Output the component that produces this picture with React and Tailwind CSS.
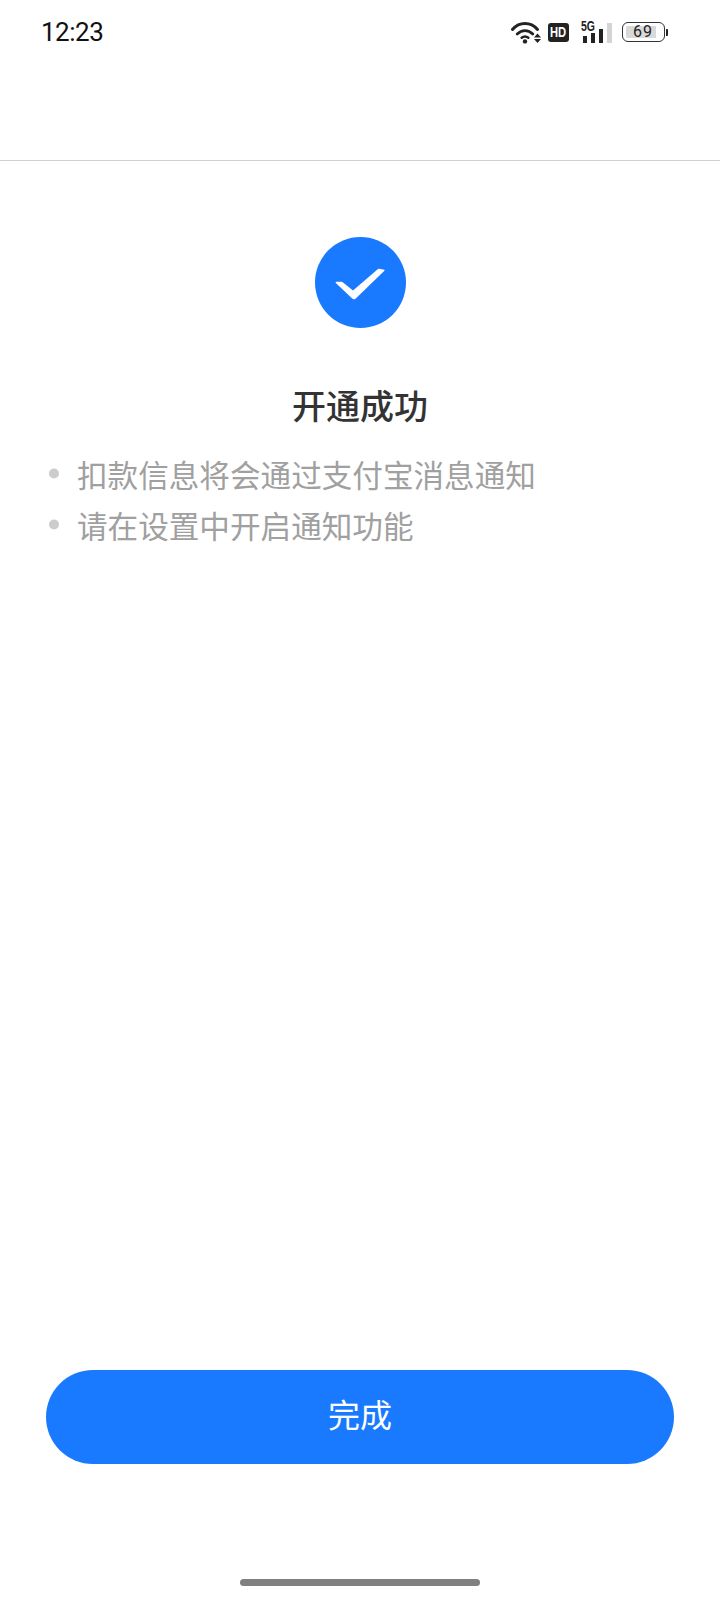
const TIPS = ['扣款信息将会通过支付宝消息通知', '请在设置中开启通知功能']

const SANS = "font-['Noto_Sans_CJK_SC','Noto_Sans',sans-serif]"

function WifiIcon() {
  return (
    <svg width="30" height="23" viewBox="0 0 30 23" fill="none" className="block">
      <path d="M1.5 8.5 C8.5 0.6 19.5 0.6 26.5 8.5" stroke="#222" strokeWidth="3" strokeLinecap="round" />
      <path d="M6.2 13 C10.8 8.4 17.2 8.4 21.8 13" stroke="#222" strokeWidth="2.8" strokeLinecap="round" />
      <path d="M10.6 16.8 C12.8 15 15.2 15 17.4 16.8" stroke="#222" strokeWidth="2.4" strokeLinecap="round" />
      <circle cx="14" cy="20.4" r="2.2" fill="#222" />
      <path d="M26.5 12.5 L30 16.5 H23 Z" fill="#222" />
      <path d="M23 18 H30 L26.5 22 Z" fill="#222" />
    </svg>
  )
}

function SignalIcon() {
  return (
    <div className="relative w-[31px] h-[22px]">
      <span className="absolute left-0 top-[-1px] font-['Liberation_Sans',sans-serif] font-bold text-[14px] leading-[12px] text-[#222] inline-block scale-x-[0.75] origin-left">5G</span>
      <div className="absolute inset-0 flex items-end pl-[2px] gap-[4px]">
        <div className="w-[4px] h-[7px] bg-[#222]" />
        <div className="w-[4px] h-[10px] bg-[#222]" />
        <div className="w-[4px] h-[14px] bg-[#222]" />
        <div className="w-[5px] h-[20px] bg-[#d4d4d4]" />
      </div>
    </div>
  )
}

function Battery() {
  return (
    <div className="flex items-center">
      <div className="relative w-[43px] h-[20px] rounded-[6px] border border-[#333]">
        <div className="absolute left-[3px] top-[3px] bottom-[3px] w-[30px] rounded-l-[2px] bg-[#d9d9d9]" />
        <div className="relative h-full flex items-center justify-center pr-[1px] font-['Roboto',sans-serif] text-[16px] leading-none tracking-[1px] text-[#222]">69</div>
      </div>
      <div className="w-[2px] h-[7px] ml-[1px] rounded-r-[1px] bg-[#222]" />
    </div>
  )
}

function StatusBar() {
  return (
    <div className="flex items-center h-[64px] pl-[41px] pr-[52px]">
      <span className="font-['Roboto',sans-serif] text-[26px] leading-none tracking-[-0.5px] text-[#111]">12:23</span>
      <div className="ml-auto flex items-center">
        <WifiIcon />
        <div className="ml-[7px] flex items-center justify-center w-[21px] h-[19px] rounded-[3px] bg-[#222] font-['Liberation_Sans',sans-serif] font-bold text-[14px] leading-none text-white">
          <span className="inline-block scale-x-[0.8]">HD</span>
        </div>
        <div className="ml-[12px]"><SignalIcon /></div>
        <div className="ml-[10px]"><Battery /></div>
      </div>
    </div>
  )
}

export default function App() {
  return (
    <div className={`flex flex-col h-[1600px] bg-white ${SANS}`}>
      <header className="h-[161px] border-b border-[#d0d0d0]">
        <StatusBar />
      </header>

      <main className="flex-1 flex flex-col">
        <div className="mt-[76px] mx-auto flex items-center justify-center w-[91px] h-[91px] rounded-full bg-[#1a7aff]">
          <svg width="50" height="32" viewBox="0 0 50 32" fill="#fff" className="translate-y-[1px]">
            <path d="M1.2 13.8 H6.6 Q7.2 13.8 7.7 14.2 L18 22.4 L43 1 Q43.4 0.6 44 0.7 L49.2 1.8 Q50 2 49.4 2.7 L20.8 30.4 Q19 32 17.2 30.6 L0.8 15 Q0.2 14 1.2 13.8 Z" />
          </svg>
        </div>

        <h1 className="mt-[52px] text-center text-[34px] leading-[50px] font-medium text-[#333]">开通成功</h1>

        <ul className="mt-[19px] pl-[49px] flex flex-col">
          {TIPS.map((tip) => (
            <li key={tip} className="flex items-center h-[51px] text-[30.6px] font-normal text-[#a0a0a0]">
              <span className="w-[10px] h-[10px] rounded-full bg-[#cccccc] mr-[18px] -translate-y-[1.5px]" />
              {tip}
            </li>
          ))}
        </ul>

        <button className="mt-auto mx-[46px] h-[94px] pb-[8px] rounded-full bg-[#1a7aff] text-[32px] text-white">完成</button>

        <div className="mt-[115px] mb-[14px] mx-auto w-[240px] h-[7px] rounded-full bg-[#808080]" />
      </main>
    </div>
  )
}
